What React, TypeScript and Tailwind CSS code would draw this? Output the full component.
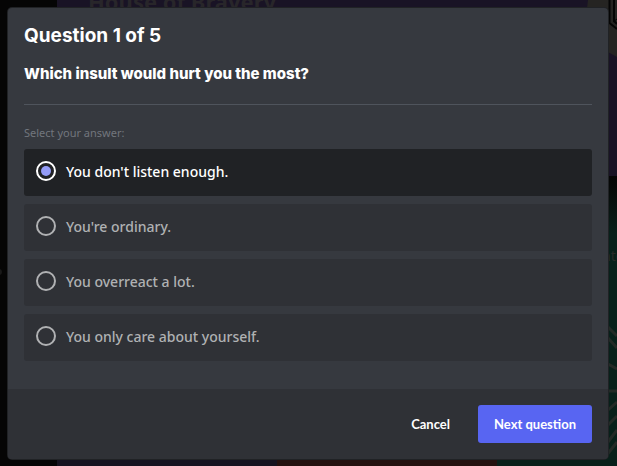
import { useState } from "react";

const answers = [
  "You don't listen enough.",
  "You're ordinary.",
  "You overreact a lot.",
  "You only care about yourself.",
];

function Backdrop() {
  return (
    <div aria-hidden="true" className="absolute inset-0 flex overflow-hidden bg-[#050505]">
      <div className="flex w-[57px] shrink-0 items-center">
        <span className="mt-[77px] -ml-1 size-[6px] rounded-full bg-[#191919]" />
      </div>
      <div className="flex min-w-0 grow flex-col">
        <div className="h-[176px] shrink-0 bg-[#191325] pl-[31px]">
          <p className="-mt-3 font-['Noto_Sans',sans-serif] text-[22px] leading-[26px] font-bold text-[#28262a]">House of Bravery</p>
        </div>
        <div className="flex grow">
          <div className="w-[220px] shrink-0 bg-[#161320]" />
          <div className="w-[220px] shrink-0 bg-[#24110f]" />
          <div className="grow bg-linear-to-b from-[#050505] to-[#08201a] to-20%" />
        </div>
      </div>
      <svg className="absolute top-0 right-0 h-[466px] w-[40px]" viewBox="577 0 40 466" fill="none">
        <path d="M588 0H617V57L608 52Q589 38 587 8Z" fill="#252422" />
        <path d="M609.5 0V23L617 29M614 0V21L617 24" stroke="#050505" strokeWidth="2" />
        <path d="M613 22L617 19" stroke="#050505" />
        <text x="602" y="261" fontFamily="Noto Sans, sans-serif" fontSize="14" fill="#262b28">nte</text>
        <path d="M608 327L617 336M608 338L617 348M608 364L617 369M608 391H617M608 410L617 402M608 425L617 416M608 442L617 430M606 456L617 442" stroke="#232a26" strokeWidth="3" />
      </svg>
    </div>
  );
}

export default function App() {
  const [selected, setSelected] = useState(0);

  return (
    <div className="relative min-h-screen pt-2 pr-[9px] pb-[7px] pl-2 font-['Noto_Sans',sans-serif]">
      <Backdrop />
      <form
        role="dialog"
        aria-labelledby="quiz-title"
        onSubmit={(event) => event.preventDefault()}
        className="relative overflow-hidden rounded bg-[#36393f] shadow-[0_0_0_1px_#202225]"
      >
        <div className="px-4 pt-4 pb-7">
          <h1 id="quiz-title" className="font-[Inter,sans-serif] text-[19px] leading-6 font-bold text-white">
            Question 1 of 5
          </h1>
          <h2 className="mt-4 border-b border-[#4f545c] pb-5 font-[Inter,sans-serif] text-[15px] leading-5 font-extrabold text-white">
            Which insult would hurt you the most?
          </h2>
          <fieldset className="mt-5">
            <legend className="text-[11px] leading-4 text-[#72767d]">Select your answer:</legend>
            <div className="mt-2 flex flex-col gap-2">
              {answers.map((answer, index) => (
                <label
                  key={answer}
                  className="flex h-[47px] cursor-pointer items-center gap-[10px] rounded-[3px] bg-[#2f3136] px-3 pb-[3px] text-sm leading-5 font-medium text-[#b0b1b3] has-checked:bg-[#202225] has-checked:text-white"
                >
                  <input
                    type="radio"
                    name="answer"
                    checked={selected === index}
                    onChange={() => setSelected(index)}
                    className="grid size-5 shrink-0 appearance-none place-items-center rounded-full border-2 border-current before:size-[10px] before:rounded-full checked:before:bg-[#949cf7]"
                  />
                  <span className="pt-0.5">{answer}</span>
                </label>
              ))}
            </div>
          </fieldset>
        </div>
        <div className="flex justify-end gap-3 bg-[#2f3136] p-4 font-[Lato,sans-serif] text-[13px] leading-4 font-bold text-white">
          <button type="button" className="h-[38px] px-4">Cancel</button>
          <button type="submit" className="h-[38px] rounded-[3px] bg-[#5865f2] px-4">Next question</button>
        </div>
      </form>
    </div>
  );
}
